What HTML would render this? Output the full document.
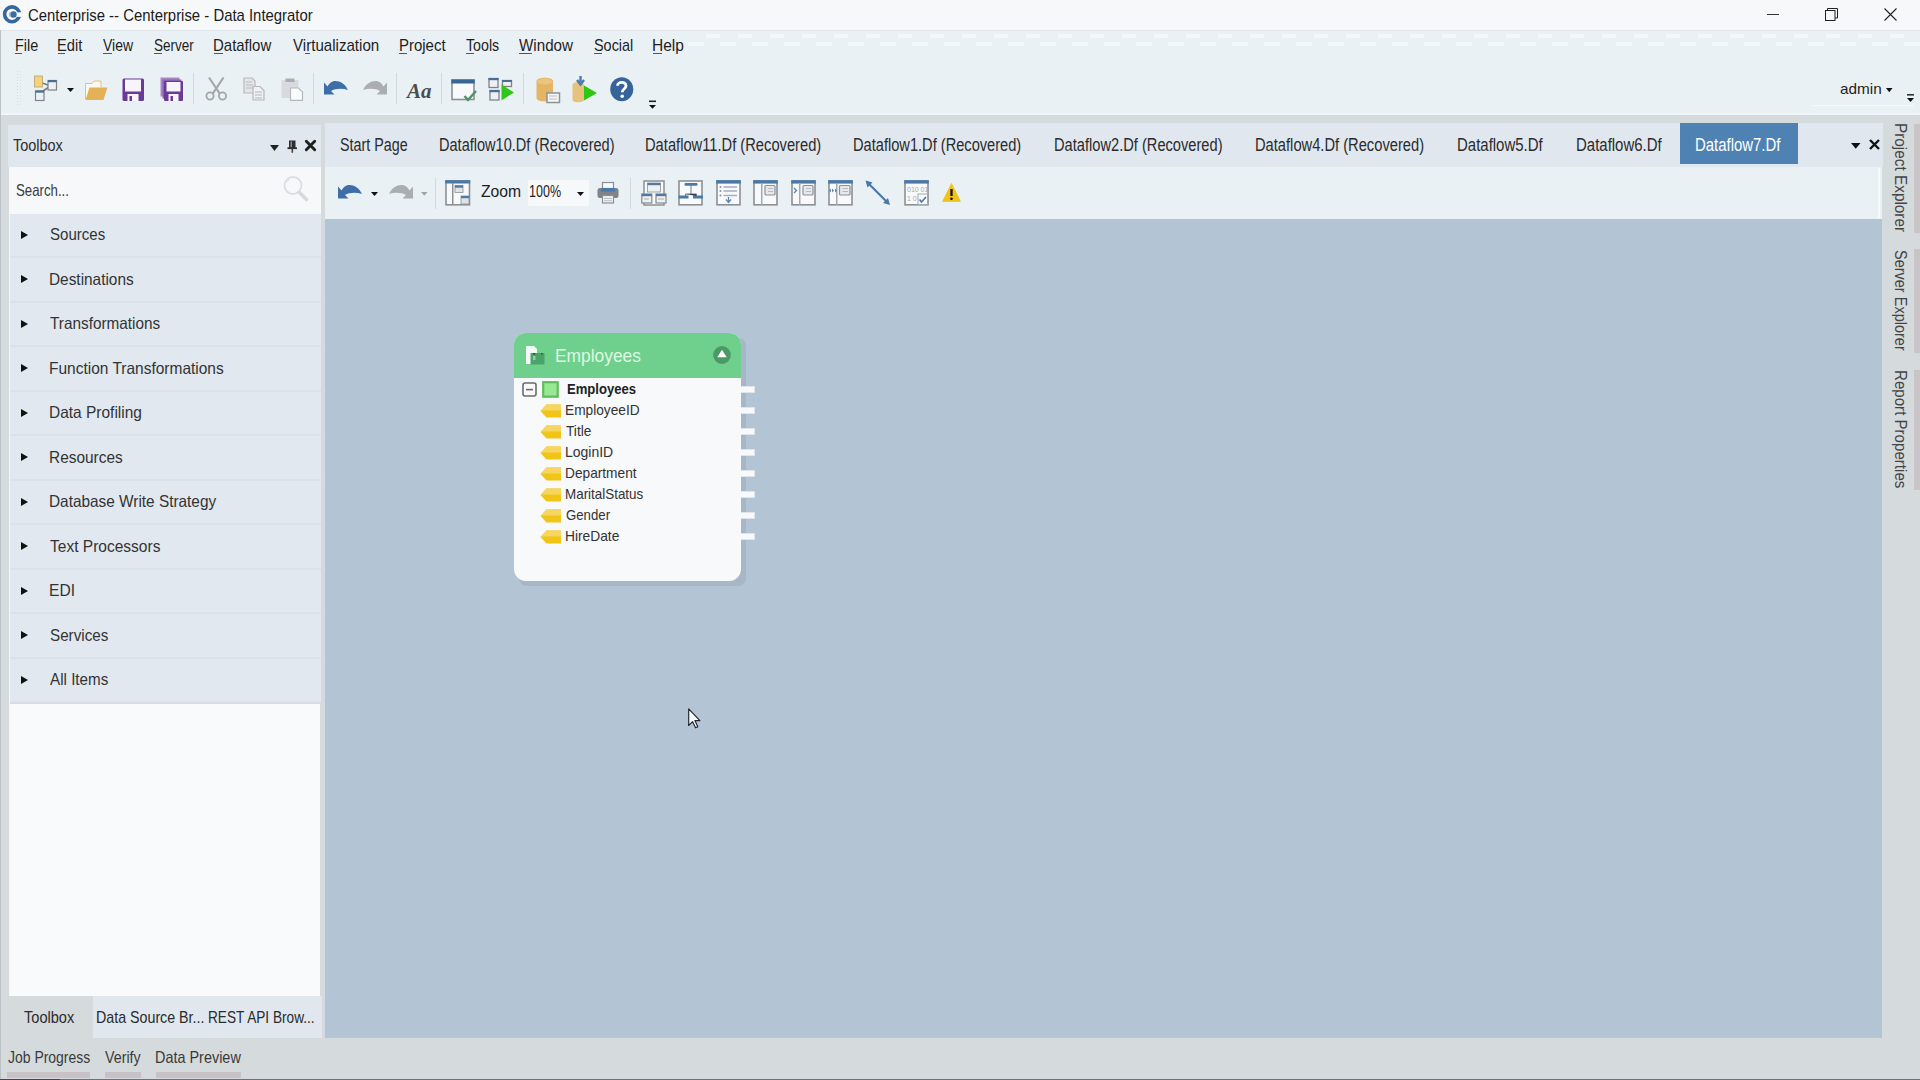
<!DOCTYPE html>
<html><head><meta charset="utf-8">
<style>
*{margin:0;padding:0;box-sizing:border-box}
html,body{width:1920px;height:1080px;overflow:hidden;background:#eaf1f4;font-family:"Liberation Sans",sans-serif;position:relative}
.a{position:absolute}
.t{position:absolute;line-height:1;white-space:pre;transform-origin:0 0}
svg{position:absolute;overflow:visible}
.tri{position:absolute;width:0;height:0;border-top:4.5px solid transparent;border-bottom:4.5px solid transparent;border-left:7px solid #111}
.row{position:absolute;left:10px;width:311px;height:44.5px;background:#e1e8ef;border-bottom:2px solid #dbe2e9}
</style></head><body>
<!-- title bar -->
<div class="a" style="left:0;top:0;width:1920px;height:30px;background:#f6f8fa"></div>
<!-- menu + toolbar bg -->
<div class="a" style="left:0;top:30px;width:1920px;height:85px;background:#eaf1f4;border-top:1px solid #dfe5e9"></div>
<div class="a" style="left:690px;top:34px;width:1230px;height:4px;background:repeating-linear-gradient(90deg,transparent 0 16px,#f3f8fa 16px 30px,transparent 30px 32px)"></div>
<div class="a" style="left:688px;top:42px;width:1232px;height:4px;background:repeating-linear-gradient(90deg,#f3f8fa 0 16px,transparent 16px 32px)"></div>
<!-- gray band + window frame -->
<div class="a" style="left:0;top:113px;width:1920px;height:2px;background:#f1f7fa"></div>
<div class="a" style="left:0;top:115px;width:1920px;height:965px;background:#d5dadd"></div>
<div class="a" style="left:0;top:30px;width:1px;height:1050px;background:#bcc3c8"></div>
<div class="a" style="left:0;top:1079px;width:1920px;height:1px;background:#6e7178"></div><div class="a" style="left:0;top:1079px;width:60px;height:1px;background:#4a4350"></div>
<!-- toolbox panel -->
<div class="a" style="left:8px;top:125px;width:312.5px;height:42px;background:#e0e7ee"></div>
<div class="a" style="left:9px;top:167px;width:312px;height:47px;background:#f6f8fa"></div>
<div class="a" style="left:9px;top:214px;width:1px;height:782px;background:#f4f7f9"></div>
<div class="a" style="left:10px;top:703.5px;width:310px;height:292.5px;background:#f8fafc"></div>
<!-- bottom tabs -->
<div class="a" style="left:9px;top:996px;width:84px;height:42px;background:#d5dadd"></div>
<div class="a" style="left:93px;top:996px;width:229px;height:42px;background:#e0e7ee"></div>
<div class="a" style="left:7px;top:1072px;width:83px;height:6px;background:#c8c2c7"></div>
<div class="a" style="left:105px;top:1072px;width:36px;height:6px;background:#c8c2c7"></div>
<div class="a" style="left:156px;top:1072px;width:85px;height:6px;background:#c8c2c7"></div>
<!-- document -->
<div class="a" style="left:324.5px;top:123px;width:1558px;height:44px;background:#e0e7ee"></div>
<div class="a" style="left:1680px;top:123px;width:118px;height:41px;background:#4e82b2"></div>
<div class="a" style="left:325px;top:167px;width:1557px;height:52px;background:#eaf1f4"></div>
<div class="a" style="left:1878px;top:168px;width:2px;height:50px;background:#f7fafb"></div>
<div class="a" style="left:325px;top:219px;width:1557px;height:819px;background:#b3c4d4"></div>
<!-- right panel bars -->
<div class="a" style="left:1914px;top:124px;width:6px;height:109px;background:#c9c4c8"></div>
<div class="a" style="left:1914px;top:249px;width:6px;height:104px;background:#c9c4c8"></div>
<div class="a" style="left:1914px;top:370px;width:6px;height:120px;background:#c9c4c8"></div>
<div class="row" style="top:213.5px"></div>
<div class="tri" style="left:21px;top:230.5px"></div>
<div class="row" style="top:258.0px"></div>
<div class="tri" style="left:21px;top:275.0px"></div>
<div class="row" style="top:302.5px"></div>
<div class="tri" style="left:21px;top:319.5px"></div>
<div class="row" style="top:347.0px"></div>
<div class="tri" style="left:21px;top:364.0px"></div>
<div class="row" style="top:391.5px"></div>
<div class="tri" style="left:21px;top:408.5px"></div>
<div class="row" style="top:436.0px"></div>
<div class="tri" style="left:21px;top:453.0px"></div>
<div class="row" style="top:480.5px"></div>
<div class="tri" style="left:21px;top:497.5px"></div>
<div class="row" style="top:525.0px"></div>
<div class="tri" style="left:21px;top:542.0px"></div>
<div class="row" style="top:569.5px"></div>
<div class="tri" style="left:21px;top:586.5px"></div>
<div class="row" style="top:614.0px"></div>
<div class="tri" style="left:21px;top:631.0px"></div>
<div class="row" style="top:658.5px"></div>
<div class="tri" style="left:21px;top:675.5px"></div>

<!-- logo -->
<svg style="left:0px;top:0px" width="26" height="28" viewBox="0 0 26 28"><circle cx="12" cy="14.3" r="7.4" fill="none" stroke="#35679c" stroke-width="3.6"/><rect x="15.5" y="12.3" width="8" height="4.6" fill="#f6f8fa"/><circle cx="13.4" cy="14.5" r="3.3" fill="#3a6ea3"/><rect x="9" y="12.5" width="1.6" height="4" fill="#9fbad4"/></svg>
<!-- window controls -->
<div class="a" style="left:1767px;top:14px;width:12px;height:1px;background:#333"></div>
<svg style="left:1825px;top:8px" width="13" height="13" viewBox="0 0 13 13"><rect x="0.5" y="2.5" width="9.5" height="10" fill="none" stroke="#222" stroke-width="1"/><path d="M2.5 2.5 V0.5 H12.5 V10 H10" fill="none" stroke="#222" stroke-width="1"/></svg>
<svg style="left:1884px;top:8px" width="13" height="13" viewBox="0 0 13 13"><path d="M0.5 0.5 L12.5 12.5 M12.5 0.5 L0.5 12.5" stroke="#222" stroke-width="1.1"/></svg>
<!-- menu underlines -->
<div class="a" style="left:15px;top:52.5px;width:7px;height:1.2px;background:#555"></div>
<div class="a" style="left:58px;top:52.5px;width:7px;height:1.2px;background:#555"></div>
<div class="a" style="left:103px;top:52.5px;width:9px;height:1.2px;background:#555"></div>
<div class="a" style="left:154px;top:52.5px;width:8px;height:1.2px;background:#555"></div>
<div class="a" style="left:214px;top:52.5px;width:9px;height:1.2px;background:#555"></div>
<div class="a" style="left:305px;top:52.5px;width:5px;height:1.2px;background:#555"></div>
<div class="a" style="left:399px;top:52.5px;width:8px;height:1.2px;background:#555"></div>
<div class="a" style="left:466px;top:52.5px;width:8px;height:1.2px;background:#555"></div>
<div class="a" style="left:519px;top:52.5px;width:13px;height:1.2px;background:#555"></div>
<div class="a" style="left:594px;top:52.5px;width:8px;height:1.2px;background:#555"></div>
<div class="a" style="left:653px;top:52.5px;width:9px;height:1.2px;background:#555"></div>
<!-- toolbar grip -->
<div class="a" style="left:16px;top:70px;width:6px;height:37px;background:radial-gradient(circle,#d5dde2 0.8px,transparent 1px) 0 0/3px 3px"></div>
<!-- new dataflow -->
<svg style="left:34px;top:75px" width="42" height="27" viewBox="0 0 42 27">
<path d="M5 7 L17 11 M9 16 L15 12" stroke="#7b7e82" stroke-width="1.6" fill="none"/>
<rect x="0.5" y="1" width="8" height="11" fill="#f3d47a" stroke="#b8a070" stroke-width="0.8"/>
<rect x="14" y="5.5" width="8.5" height="9.5" fill="#eef1f4" stroke="#7e8388" stroke-width="1.2"/><rect x="14" y="5" width="8.5" height="2.2" fill="#4d6e94"/>
<rect x="1.5" y="16" width="8.5" height="9.5" fill="#eef1f4" stroke="#7e8388" stroke-width="1.2"/><rect x="1.5" y="15.5" width="8.5" height="2.2" fill="#4d6e94"/>
<path d="M33 13 L40 13 L36.5 17 Z" fill="#111"/>
</svg>
<!-- folder -->
<svg style="left:84px;top:79px" width="25" height="23" viewBox="0 0 25 23"><path d="M1.5 20 V4.5 H8 L10 2 H17 V8" fill="#fbf8f0" stroke="#e2c183" stroke-width="1"/><path d="M1.5 21 L5.5 8.5 H23.5 L19.5 21 Z" fill="#e3b256"/></svg>
<!-- save -->
<svg style="left:122px;top:78px" width="23" height="24" viewBox="0 0 23 24"><rect x="0.5" y="0.5" width="21.5" height="22.5" rx="1.5" fill="#6a3a97"/><rect x="3" y="1.5" width="16" height="12" fill="#f7f5fb"/><rect x="5.5" y="16" width="11" height="7" fill="#f7f5fb"/><rect x="7.5" y="18" width="2.5" height="5" fill="#6a3a97"/></svg>
<svg style="left:160px;top:77px" width="24" height="25" viewBox="0 0 24 25"><rect x="0.5" y="0.5" width="19" height="19" fill="#a887c7"/><rect x="2.5" y="2.5" width="19" height="19" fill="#8a62b3"/><rect x="4" y="4" width="19" height="20" rx="1" fill="#6a3a97"/><rect x="6.5" y="5" width="14" height="9.5" fill="#f7f5fb"/><rect x="8.5" y="17" width="10" height="7" fill="#f7f5fb"/><rect x="10.5" y="19" width="2.5" height="5" fill="#6a3a97"/></svg>
<!-- separators -->
<div class="a" style="left:193px;top:73px;width:1px;height:31px;background:#d3dade"></div>
<div class="a" style="left:313px;top:73px;width:1px;height:31px;background:#d3dade"></div>
<div class="a" style="left:396px;top:73px;width:1px;height:31px;background:#d3dade"></div>
<div class="a" style="left:441px;top:73px;width:1px;height:31px;background:#d3dade"></div>
<div class="a" style="left:523px;top:73px;width:1px;height:31px;background:#d3dade"></div>
<!-- cut -->
<svg style="left:205px;top:77px" width="23" height="24" viewBox="0 0 23 24"><path d="M4 0.5 L15 17 M18.5 0.5 L7.5 17" stroke="#a3a7ab" stroke-width="2.2" fill="none"/><circle cx="5" cy="19" r="3.6" fill="none" stroke="#a3a7ab" stroke-width="1.8"/><circle cx="17.5" cy="19" r="3.6" fill="none" stroke="#a3a7ab" stroke-width="1.8"/></svg>
<!-- copy -->
<svg style="left:243px;top:77px" width="22" height="24" viewBox="0 0 22 24"><path d="M1 1 H9 L12 4 V16 H1 Z" fill="#e3e6e9" stroke="#b5b9bd" stroke-width="1.2"/><path d="M3 5 H9 M3 8 H10 M3 11 H10" stroke="#b5b9bd"/><path d="M10 9.5 H17 L21 13.5 V23 H10 Z" fill="#eef0f2" stroke="#b5b9bd" stroke-width="1.2"/><path d="M12 15 H19 M12 18 H19 M12 21 H19" stroke="#b5b9bd"/></svg>
<!-- paste -->
<svg style="left:281px;top:77px" width="23" height="24" viewBox="0 0 23 24"><rect x="0.5" y="3" width="17" height="18" fill="#d7dbdf"/><rect x="4.5" y="1.5" width="9" height="3.5" fill="#a9adb1"/><path d="M9.5 11 H17.5 L21.5 15 V23.3 H9.5 Z" fill="#fafbfb" stroke="#b5b9bd" stroke-width="1.2"/></svg>
<!-- undo -->
<svg style="left:324px;top:80px" width="25" height="16" viewBox="0 0 25 16"><path d="M0 2.5 L0 14.5 L10.5 14.5 L7 11 C11 8.5 18 8 24 10 C21 3 15 0.3 10 1 C7.5 1.5 5 3.5 3.5 6.5 Z" fill="#3d6ea7"/></svg>
<!-- redo -->
<svg style="left:363px;top:80px" width="25" height="16" viewBox="0 0 25 16"><path d="M24 2.5 L24 14.5 L13.5 14.5 L17 11 C13 8.5 6 8 0 10 C3 3 9 0.3 14 1 C16.5 1.5 19 3.5 20.5 6.5 Z" fill="#aaaeb3"/></svg>
<!-- Aa -->
<div class="t" style="left:407px;top:81px;font-family:'Liberation Serif';font-style:italic;font-weight:bold;font-size:21px;color:#4a4d50">Aa</div>
<!-- window check -->
<svg style="left:451px;top:79px" width="26" height="23" viewBox="0 0 26 23"><rect x="1" y="1" width="22" height="19.5" fill="#f7f9fb" stroke="#8c9095" stroke-width="1.6"/><rect x="0.3" y="0.5" width="23.4" height="4" fill="#386496"/><path d="M13.5 17 L17 21 L25 12" stroke="#4f8f6c" stroke-width="2.4" fill="none"/></svg>
<!-- table play -->
<svg style="left:488px;top:77px" width="27" height="25" viewBox="0 0 27 25"><rect x="1" y="1.5" width="9" height="9" fill="#eef1f4" stroke="#7e8388" stroke-width="1.3"/><rect x="0.5" y="1" width="10" height="2.2" fill="#4d6e94"/><rect x="2" y="13.5" width="9" height="9.5" fill="#eef1f4" stroke="#7e8388" stroke-width="1.3"/><rect x="1.5" y="13" width="10" height="2.2" fill="#4d6e94"/><rect x="14.5" y="3.5" width="9" height="6" fill="#eef1f4" stroke="#7e8388" stroke-width="1.3"/><rect x="14" y="3" width="10" height="2" fill="#4d6e94"/><path d="M13.5 7.5 L26 15.5 L13.5 23.5 Z" fill="#2fc615"/></svg>
<!-- db -->
<svg style="left:536px;top:77px" width="25" height="26" viewBox="0 0 25 26"><path d="M0.5 4 C0.5 -0.5 17 -0.5 17 4 V21 C17 25.5 0.5 25.5 0.5 21 Z" fill="#e3b564"/><ellipse cx="8.75" cy="4.5" rx="7.5" ry="3" fill="#ebc57e"/><rect x="11" y="16" width="12.5" height="9.5" fill="#f5f6f7" stroke="#8d9196" stroke-width="1.5"/><path d="M13 19 H21 M13 22 H21" stroke="#b8bcc0"/></svg>
<svg style="left:572px;top:76px" width="26" height="27" viewBox="0 0 26 27"><path d="M0.5 9 C0.5 5 12 5 12 9 V24 C12 27 0.5 27 0.5 24 Z" fill="#e6c27d"/><path d="M8.5 0 V6 M5 4 L8.5 8.5 L12 4" stroke="#4a7ab0" stroke-width="2.4" fill="none"/><path d="M12 9.5 L25 17 L12 24.5 Z" fill="#2fc615"/></svg>
<!-- help -->
<svg style="left:610px;top:77px" width="24" height="25" viewBox="0 0 24 25"><ellipse cx="11.75" cy="12.25" rx="11.5" ry="12" fill="#36649a"/><path d="M7.5 8.8 C7.5 4.5 16 4.2 16 8.8 C16 12 12.2 12 12.2 15.2" stroke="#fff" stroke-width="2.8" fill="none"/><circle cx="12.2" cy="19.3" r="1.8" fill="#fff"/></svg>
<!-- overflow main -->
<svg style="left:649px;top:100px" width="8" height="9" viewBox="0 0 8 9"><rect x="0" y="0.5" width="7" height="1.6" fill="#222"/><path d="M0 5 H7 L3.5 8.7 Z" fill="#111"/></svg>
<!-- admin arrow + overflow -->
<svg style="left:1886px;top:88px" width="7" height="5" viewBox="0 0 7 5"><path d="M0 0 H6.5 L3.25 4.2 Z" fill="#111"/></svg>
<div class="a" style="left:1812px;top:105px;width:102px;height:1px;background:#f6f9fa"></div>
<svg style="left:1906.5px;top:94px" width="8" height="9" viewBox="0 0 8 9"><rect x="0" y="0" width="7" height="1.6" fill="#333"/><path d="M0 4 H7 L3.5 8 Z" fill="#111"/></svg>
<!-- toolbox header icons -->
<svg style="left:270px;top:144.5px" width="10" height="7" viewBox="0 0 10 7"><path d="M0 0 H9 L4.5 6 Z" fill="#222"/></svg>
<svg style="left:287px;top:140px" width="11" height="13" viewBox="0 0 11 13"><rect x="2" y="0.5" width="6.5" height="7.5" fill="#2e2e2e"/><rect x="3.5" y="1.5" width="1.5" height="6" fill="#8a8f94"/><rect x="0.5" y="7.3" width="9.5" height="1.8" fill="#2e2e2e"/><rect x="4.5" y="9" width="1.6" height="3.8" fill="#444"/></svg>
<svg style="left:305px;top:140px" width="11" height="11" viewBox="0 0 11 11"><path d="M1.3 1.3 L9.7 9.7 M9.7 1.3 L1.3 9.7" stroke="#1f1f1f" stroke-width="2.9" stroke-linecap="round"/></svg>
<!-- magnifier -->
<svg style="left:282px;top:175px" width="28" height="28" viewBox="0 0 28 28"><circle cx="11" cy="10.5" r="8.5" fill="none" stroke="#dcdde1" stroke-width="1.8"/><path d="M4.5 7 L7 4.5" stroke="#dfe3e3" stroke-width="1.2"/><path d="M18 18 L24.5 24.5" stroke="#ddd7dd" stroke-width="3.8" stroke-linecap="round"/></svg>
<!-- tab strip right icons -->
<svg style="left:1851px;top:142.5px" width="10" height="7" viewBox="0 0 10 7"><path d="M0 0 H9.5 L4.75 5.7 Z" fill="#111"/></svg>
<svg style="left:1869px;top:139px" width="11" height="11" viewBox="0 0 11 11"><path d="M1 1 L10 10 M10 1 L1 10" stroke="#111" stroke-width="2.4"/></svg>
<!-- doc toolbar -->
<svg style="left:337.5px;top:183.5px" width="25" height="15" viewBox="0 0 25 15"><path d="M0 2.5 L0 14.5 L10.5 14.5 L7 11 C11 8.5 18 8 24 10 C21 3 15 0.3 10 1 C7.5 1.5 5 3.5 3.5 6.5 Z" fill="#3d6ea7"/></svg>
<svg style="left:371px;top:191.5px" width="8" height="5" viewBox="0 0 8 5"><path d="M0 0 H7 L3.5 4 Z" fill="#111"/></svg>
<svg style="left:389px;top:183.5px" width="25" height="15" viewBox="0 0 25 15"><path d="M24 2.5 L24 14.5 L13.5 14.5 L17 11 C13 8.5 6 8 0 10 C3 3 9 0.3 14 1 C16.5 1.5 19 3.5 20.5 6.5 Z" fill="#aaaeb3"/></svg>
<svg style="left:421px;top:191.5px" width="8" height="5" viewBox="0 0 8 5"><path d="M0 0 H6.5 L3.25 3.8 Z" fill="#a0a4a8"/></svg>
<div class="a" style="left:434.5px;top:177.5px;width:1px;height:31px;background:#d3dade"></div>
<svg style="left:445px;top:179.5px" width="26" height="27" viewBox="0 0 26 27"><rect x="1" y="1" width="23.5" height="23.8" fill="#f7f9fb" stroke="#8c9095" stroke-width="1.6"/><rect x="0.2" y="0.2" width="25" height="3.3" fill="#4a78a8"/><rect x="7" y="3" width="1.5" height="22" fill="#8c9095"/><rect x="10" y="5.5" width="8" height="7" fill="#dfe3e7" stroke="#8c9095" stroke-width="0.8"/><rect x="10" y="5.5" width="8" height="2.2" fill="#5079a3"/><rect x="16" y="16" width="8" height="8" fill="#dfe3e7" stroke="#8c9095" stroke-width="0.8"/><rect x="16" y="16" width="8" height="2.2" fill="#5079a3"/></svg>
<div class="a" style="left:528px;top:180px;width:61px;height:26px;background:#f6f8fa"></div>
<svg style="left:576.5px;top:191.5px" width="8" height="5" viewBox="0 0 8 5"><path d="M0 0 H7 L3.5 4 Z" fill="#111"/></svg>
<svg style="left:597px;top:182px" width="22" height="22" viewBox="0 0 22 22"><rect x="5.5" y="0.5" width="11" height="6" fill="#f7f9fb" stroke="#8c9095" stroke-width="1.2"/><rect x="0.5" y="6" width="21" height="10" rx="2.5" fill="#7f8388"/><rect x="4" y="6" width="14" height="3.5" fill="#4a78a8"/><rect x="5.5" y="13.5" width="11" height="7.5" fill="#f1f3f5" stroke="#8c9095" stroke-width="1.2"/><path d="M7 16.5 H15 M7 18.8 H15" stroke="#b7bcc1"/></svg>
<div class="a" style="left:630px;top:177.5px;width:1px;height:31px;background:#d3dade"></div>
<!-- A: hierarchy windows -->
<svg style="left:640.5px;top:179.5px" width="26" height="27" viewBox="0 0 26 27"><rect x="3" y="1" width="20" height="24" fill="#f7f9fb" stroke="#8c9095" stroke-width="1.5"/><rect x="6.5" y="3" width="13" height="9" fill="#eef1f4" stroke="#8c9095" stroke-width="0.8"/><rect x="6.5" y="3" width="13" height="2.2" fill="#5079a3"/><rect x="0.8" y="14" width="10" height="9" fill="#eef1f4" stroke="#8c9095" stroke-width="1.3"/><rect x="0.8" y="14" width="10" height="2.2" fill="#5079a3"/><rect x="15" y="14" width="10" height="9" fill="#eef1f4" stroke="#8c9095" stroke-width="1.3"/><rect x="15" y="14" width="10" height="2.2" fill="#5079a3"/><path d="M3 19 H8 M17 19 H23" stroke="#b7a88a"/></svg>
<!-- B: tree -->
<svg style="left:678px;top:179.5px" width="26" height="27" viewBox="0 0 26 27"><rect x="1" y="1" width="23" height="23.8" fill="#f7f9fb" stroke="#8c9095" stroke-width="1.6"/><rect x="6.5" y="3" width="13" height="2.8" rx="1" fill="#4a78a8"/><path d="M13 5 V14 M7.5 14 H18.5 V16 M7.5 14 V16" stroke="#6c7a88" stroke-width="1"/><rect x="0.5" y="15.5" width="10" height="3" fill="#4a78a8"/><rect x="15" y="15.5" width="10" height="3" fill="#4a78a8"/></svg>
<!-- C: list -->
<svg style="left:716px;top:179.5px" width="26" height="27" viewBox="0 0 26 27"><rect x="1" y="1" width="23" height="23.8" fill="#f7f9fb" stroke="#8c9095" stroke-width="1.6"/><rect x="0.2" y="0.2" width="24.6" height="3.4" fill="#4a78a8"/><circle cx="4.5" cy="7" r="1" fill="#8c9095"/><circle cx="4.5" cy="11" r="1" fill="#8c9095"/><circle cx="4.5" cy="15.5" r="1" fill="#8c9095"/><path d="M7.5 7 H21 M7.5 11 H21 M7.5 15.5 H21" stroke="#a9adc0" stroke-width="1.3"/><path d="M12.5 17 V22 M10 19.5 L12.5 22.5 L15 19.5" stroke="#5a86b5" stroke-width="1.3" fill="none"/></svg>
<!-- D -->
<svg style="left:753px;top:179.5px" width="26" height="27" viewBox="0 0 26 27"><rect x="1" y="1" width="23" height="23.8" fill="#f7f9fb" stroke="#8c9095" stroke-width="1.6"/><rect x="0.2" y="0.2" width="24.6" height="3.4" fill="#4a78a8"/><rect x="8" y="3" width="1.5" height="22" fill="#a5a9ad"/><rect x="12" y="5.5" width="10" height="9.5" rx="1" fill="#e6e8eb" stroke="#8c9095" stroke-width="1.2"/><path d="M15 8.5 H20 M15 11.5 H20" stroke="#b7bcc1"/></svg>
<!-- E -->
<svg style="left:791px;top:179.5px" width="26" height="27" viewBox="0 0 26 27"><rect x="1" y="1" width="23" height="23.8" fill="#f7f9fb" stroke="#8c9095" stroke-width="1.6"/><rect x="0.2" y="0.2" width="24.6" height="3.4" fill="#4a78a8"/><rect x="8" y="3" width="1.5" height="22" fill="#a5a9ad"/><rect x="12" y="5.5" width="10" height="9.5" rx="1" fill="#e6e8eb" stroke="#8c9095" stroke-width="1.2"/><path d="M15 8.5 H20 M15 11.5 H20" stroke="#b7bcc1"/><path d="M3 8 L5.5 10.5 L3 13" stroke="#5a86b5" stroke-width="1.4" fill="none"/></svg>
<!-- F -->
<svg style="left:828px;top:179.5px" width="26" height="27" viewBox="0 0 26 27"><rect x="1" y="1" width="23" height="23.8" fill="#f7f9fb" stroke="#8c9095" stroke-width="1.6"/><rect x="0.2" y="0.2" width="24.6" height="3.4" fill="#4a78a8"/><rect x="8" y="3" width="1.5" height="22" fill="#a5a9ad"/><rect x="11.5" y="5.5" width="10.5" height="9.5" rx="1" fill="#e6e8eb" stroke="#8c9095" stroke-width="1.2"/><path d="M14.5 8.5 H20 M14.5 11.5 H20" stroke="#b7bcc1"/><path d="M1 10.5 L3 8.5 L3 12.5 Z M4 8.5 L6 10.5 L4 12.5 Z M7 8.5 L9 10.5 L7 12.5 Z" fill="#5a86b5"/></svg>
<!-- line arrow -->
<svg style="left:865px;top:180px" width="26" height="26" viewBox="0 0 26 26"><path d="M2 2 L22 22" stroke="#4a78a8" stroke-width="2.2"/><path d="M0.5 0.5 L7.5 2.5 L2.5 7.5 Z M25 25 L18 23 L23 18 Z" fill="#4a78a8"/></svg>
<!-- data check -->
<svg style="left:903.5px;top:179.5px" width="26" height="27" viewBox="0 0 26 27"><rect x="1" y="1" width="23" height="23.8" fill="#f7f9fb" stroke="#8c9095" stroke-width="1.6"/><rect x="0.2" y="0.2" width="24.6" height="3.4" fill="#4a78a8"/><text x="3" y="12" font-family="Liberation Sans" font-size="7" fill="#a5a9ad">010 01</text><text x="3" y="21" font-family="Liberation Sans" font-size="7" fill="#a5a9ad">1 0</text><rect x="14" y="14" width="9.5" height="10.5" fill="#f7f9fb" stroke="#a5a9ad" stroke-width="1"/><path d="M15.5 19.5 L17.5 22 L22 17" stroke="#4a78a8" stroke-width="1.6" fill="none"/></svg>
<!-- warning -->
<svg style="left:941.5px;top:183px" width="19" height="19" viewBox="0 0 19 19"><path d="M9.5 0.5 L18.5 18.5 H0.5 Z" fill="#f1c319" stroke="#f1c319" stroke-width="0.8" stroke-linejoin="round"/><path d="M9.5 6 V13" stroke="#111" stroke-width="2.3"/><circle cx="9.5" cy="15.8" r="1.3" fill="#111"/></svg>

<!-- Employees box -->
<div class="a" style="left:519px;top:338px;width:227px;height:248px;border-radius:8px;background:#a7b7c8"></div>
<div class="a" style="left:513.5px;top:332.5px;width:227px;height:248px;border-radius:12px;background:#f7f9fb;overflow:hidden"><div class="a" style="left:0;top:0;width:227px;height:45px;background:#6fd08e"></div></div>
<svg style="left:525px;top:345px" width="21" height="21" viewBox="0 0 21 21"><path d="M1 1 H9 L12 4 V19 H1 Z" fill="#f3fbf5"/><rect x="5.5" y="8" width="14" height="11.5" fill="#4aa36a"/><rect x="8" y="8" width="2.2" height="1.5" fill="#1f5a35"/><rect x="16" y="8" width="1.5" height="1.5" fill="#1f5a35"/><rect x="8" y="11" width="2.5" height="4" fill="#8fd0a5"/></svg>
<svg style="left:713px;top:346px" width="18" height="18" viewBox="0 0 18 18"><circle cx="9" cy="9" r="8.9" fill="#4a9a66"/><path d="M9 3.8 L13.7 11.2 H4.3 Z" fill="#fff"/></svg>
<svg style="left:522px;top:381.5px" width="16" height="16" viewBox="0 0 16 16"><rect x="1" y="1" width="13" height="13" rx="2" fill="#fafafa" stroke="#6b6b6e" stroke-width="1.6"/><rect x="4" y="6.8" width="7" height="1.6" fill="#6b6b6e"/></svg>
<svg style="left:542px;top:381px" width="17" height="17" viewBox="0 0 17 17"><rect x="1.2" y="1.2" width="14.5" height="14.5" fill="#98e893" stroke="#5fbc5d" stroke-width="2.2"/></svg>
<svg style="left:540px;top:403.5px" width="22" height="14" viewBox="0 0 22 14"><path d="M0.5 7 L6.5 0.5 H21 V13.5 H6.5 Z" fill="#f1c418"/><path d="M0.5 7 L6.5 0.5 H21 V6.5 H1 Z" fill="#f6d660"/></svg>
<div class="a" style="left:741px;top:406.5px;width:14px;height:7px;background:#f7f9fb;border:1px solid #dfe4ea;border-left:none"></div>
<svg style="left:540px;top:424.5px" width="22" height="14" viewBox="0 0 22 14"><path d="M0.5 7 L6.5 0.5 H21 V13.5 H6.5 Z" fill="#f1c418"/><path d="M0.5 7 L6.5 0.5 H21 V6.5 H1 Z" fill="#f6d660"/></svg>
<div class="a" style="left:741px;top:427.5px;width:14px;height:7px;background:#f7f9fb;border:1px solid #dfe4ea;border-left:none"></div>
<svg style="left:540px;top:445.5px" width="22" height="14" viewBox="0 0 22 14"><path d="M0.5 7 L6.5 0.5 H21 V13.5 H6.5 Z" fill="#f1c418"/><path d="M0.5 7 L6.5 0.5 H21 V6.5 H1 Z" fill="#f6d660"/></svg>
<div class="a" style="left:741px;top:448.5px;width:14px;height:7px;background:#f7f9fb;border:1px solid #dfe4ea;border-left:none"></div>
<svg style="left:540px;top:466.5px" width="22" height="14" viewBox="0 0 22 14"><path d="M0.5 7 L6.5 0.5 H21 V13.5 H6.5 Z" fill="#f1c418"/><path d="M0.5 7 L6.5 0.5 H21 V6.5 H1 Z" fill="#f6d660"/></svg>
<div class="a" style="left:741px;top:469.5px;width:14px;height:7px;background:#f7f9fb;border:1px solid #dfe4ea;border-left:none"></div>
<svg style="left:540px;top:487.5px" width="22" height="14" viewBox="0 0 22 14"><path d="M0.5 7 L6.5 0.5 H21 V13.5 H6.5 Z" fill="#f1c418"/><path d="M0.5 7 L6.5 0.5 H21 V6.5 H1 Z" fill="#f6d660"/></svg>
<div class="a" style="left:741px;top:490.5px;width:14px;height:7px;background:#f7f9fb;border:1px solid #dfe4ea;border-left:none"></div>
<svg style="left:540px;top:508.5px" width="22" height="14" viewBox="0 0 22 14"><path d="M0.5 7 L6.5 0.5 H21 V13.5 H6.5 Z" fill="#f1c418"/><path d="M0.5 7 L6.5 0.5 H21 V6.5 H1 Z" fill="#f6d660"/></svg>
<div class="a" style="left:741px;top:511.5px;width:14px;height:7px;background:#f7f9fb;border:1px solid #dfe4ea;border-left:none"></div>
<svg style="left:540px;top:529.5px" width="22" height="14" viewBox="0 0 22 14"><path d="M0.5 7 L6.5 0.5 H21 V13.5 H6.5 Z" fill="#f1c418"/><path d="M0.5 7 L6.5 0.5 H21 V6.5 H1 Z" fill="#f6d660"/></svg>
<div class="a" style="left:741px;top:532.5px;width:14px;height:7px;background:#f7f9fb;border:1px solid #dfe4ea;border-left:none"></div>
<div class="a" style="left:741px;top:385.5px;width:14px;height:7px;background:#f7f9fb;border:1px solid #dfe4ea;border-left:none"></div>

<!-- cursor -->
<svg style="left:688px;top:708px" width="13" height="21" viewBox="0 0 13 21"><path d="M0.7 0.8 L0.7 17.5 L4.6 13.7 L7.6 19.8 L9.8 18.7 L6.9 12.6 L11.9 12.6 Z" fill="#fbfbfd" stroke="#1c2530" stroke-width="1.15" stroke-linejoin="round"/></svg>

<div class="t" style="left:27.50px;top:6.51px;font-size:17px;color:#1b1b1b;font-weight:normal;transform:scaleX(0.8760);">Centerprise -- Centerprise - Data Integrator</div>
<div class="t" style="left:14.55px;top:36.61px;font-size:17px;color:#1e1e1e;font-weight:normal;transform:scaleX(0.8520);">File</div>
<div class="t" style="left:56.94px;top:36.61px;font-size:17px;color:#1e1e1e;font-weight:normal;transform:scaleX(0.8645);">Edit</div>
<div class="t" style="left:102.80px;top:36.61px;font-size:17px;color:#1e1e1e;font-weight:normal;transform:scaleX(0.8239);">View</div>
<div class="t" style="left:154.00px;top:36.61px;font-size:17px;color:#1e1e1e;font-weight:normal;transform:scaleX(0.7935);">Server</div>
<div class="t" style="left:213.12px;top:36.61px;font-size:17px;color:#1e1e1e;font-weight:normal;transform:scaleX(0.8806);">Dataflow</div>
<div class="t" style="left:293.00px;top:36.61px;font-size:17px;color:#1e1e1e;font-weight:normal;transform:scaleX(0.8885);">Virtualization</div>
<div class="t" style="left:398.52px;top:36.61px;font-size:17px;color:#1e1e1e;font-weight:normal;transform:scaleX(0.8795);">Project</div>
<div class="t" style="left:466.00px;top:36.61px;font-size:17px;color:#1e1e1e;font-weight:normal;transform:scaleX(0.8370);">Tools</div>
<div class="t" style="left:519.40px;top:36.61px;font-size:17px;color:#1e1e1e;font-weight:normal;transform:scaleX(0.8924);">Window</div>
<div class="t" style="left:594.40px;top:36.61px;font-size:17px;color:#1e1e1e;font-weight:normal;transform:scaleX(0.8479);">Social</div>
<div class="t" style="left:652.49px;top:36.61px;font-size:17px;color:#1e1e1e;font-weight:normal;transform:scaleX(0.9132);">Help</div>
<div class="t" style="left:1840.00px;top:81.30px;font-size:15px;color:#1e1e1e;font-weight:normal;transform:scaleX(1.0194);">admin</div>
<div class="t" style="left:340.00px;top:136.79px;font-size:17.5px;color:#2b2b2b;font-weight:normal;transform:scaleX(0.8175);">Start Page</div>
<div class="t" style="left:439.07px;top:136.79px;font-size:17.5px;color:#2b2b2b;font-weight:normal;transform:scaleX(0.8316);">Dataflow10.Df (Recovered)</div>
<div class="t" style="left:645.46px;top:136.79px;font-size:17.5px;color:#2b2b2b;font-weight:normal;transform:scaleX(0.8402);">Dataflow11.Df (Recovered)</div>
<div class="t" style="left:852.96px;top:136.79px;font-size:17.5px;color:#2b2b2b;font-weight:normal;transform:scaleX(0.8356);">Dataflow1.Df (Recovered)</div>
<div class="t" style="left:1054.16px;top:136.79px;font-size:17.5px;color:#2b2b2b;font-weight:normal;transform:scaleX(0.8371);">Dataflow2.Df (Recovered)</div>
<div class="t" style="left:1255.46px;top:136.79px;font-size:17.5px;color:#2b2b2b;font-weight:normal;transform:scaleX(0.8396);">Dataflow4.Df (Recovered)</div>
<div class="t" style="left:1457.14px;top:136.79px;font-size:17.5px;color:#2b2b2b;font-weight:normal;transform:scaleX(0.8558);">Dataflow5.Df</div>
<div class="t" style="left:1576.14px;top:136.79px;font-size:17.5px;color:#2b2b2b;font-weight:normal;transform:scaleX(0.8558);">Dataflow6.Df</div>
<div class="t" style="left:1695.15px;top:136.79px;font-size:17.5px;color:#ffffff;font-weight:normal;transform:scaleX(0.8528);">Dataflow7.Df</div>
<div class="t" style="left:13.30px;top:136.83px;font-size:16.5px;color:#2d2d2d;font-weight:normal;transform:scaleX(0.8764);">Toolbox</div>
<div class="t" style="left:15.50px;top:181.83px;font-size:16.5px;color:#3a3a3a;font-weight:normal;transform:scaleX(0.8022);">Search...</div>
<div class="t" style="left:49.50px;top:226.03px;font-size:16.5px;color:#333333;font-weight:normal;transform:scaleX(0.9124);">Sources</div>
<div class="t" style="left:48.57px;top:270.53px;font-size:16.5px;color:#333333;font-weight:normal;transform:scaleX(0.9325);">Destinations</div>
<div class="t" style="left:49.50px;top:315.03px;font-size:16.5px;color:#333333;font-weight:normal;transform:scaleX(0.9295);">Transformations</div>
<div class="t" style="left:48.56px;top:359.53px;font-size:16.5px;color:#333333;font-weight:normal;transform:scaleX(0.9384);">Function Transformations</div>
<div class="t" style="left:48.56px;top:404.03px;font-size:16.5px;color:#333333;font-weight:normal;transform:scaleX(0.9380);">Data Profiling</div>
<div class="t" style="left:48.57px;top:448.53px;font-size:16.5px;color:#333333;font-weight:normal;transform:scaleX(0.9341);">Resources</div>
<div class="t" style="left:48.57px;top:493.03px;font-size:16.5px;color:#333333;font-weight:normal;transform:scaleX(0.9314);">Database Write Strategy</div>
<div class="t" style="left:49.50px;top:537.53px;font-size:16.5px;color:#333333;font-weight:normal;transform:scaleX(0.9409);">Text Processors</div>
<div class="t" style="left:48.55px;top:582.03px;font-size:16.5px;color:#333333;font-weight:normal;transform:scaleX(0.9452);">EDI</div>
<div class="t" style="left:49.50px;top:626.53px;font-size:16.5px;color:#333333;font-weight:normal;transform:scaleX(0.9219);">Services</div>
<div class="t" style="left:49.50px;top:671.03px;font-size:16.5px;color:#333333;font-weight:normal;transform:scaleX(0.9221);">All Items</div>
<div class="t" style="left:24.30px;top:1008.81px;font-size:17px;color:#2b2b2b;font-weight:normal;transform:scaleX(0.8579);">Toolbox</div>
<div class="t" style="left:95.96px;top:1008.81px;font-size:17px;color:#2b2b2b;font-weight:normal;transform:scaleX(0.8377);">Data Source Br...</div>
<div class="t" style="left:208.00px;top:1008.81px;font-size:17px;color:#2b2b2b;font-weight:normal;transform:scaleX(0.8020);">REST API Brow...</div>
<div class="t" style="left:7.50px;top:1048.53px;font-size:16.5px;color:#3a3a3a;font-weight:normal;transform:scaleX(0.8457);">Job Progress</div>
<div class="t" style="left:105.00px;top:1048.53px;font-size:16.5px;color:#3a3a3a;font-weight:normal;transform:scaleX(0.8640);">Verify</div>
<div class="t" style="left:155.43px;top:1048.53px;font-size:16.5px;color:#3a3a3a;font-weight:normal;transform:scaleX(0.8744);">Data Preview</div>
<div class="t" style="left:480.80px;top:183.11px;font-size:17px;color:#1e1e1e;font-weight:normal;transform:scaleX(0.9239);">Zoom</div>
<div class="t" style="left:529.46px;top:183.41px;font-size:17px;color:#1e1e1e;font-weight:normal;transform:scaleX(0.7365);">100%</div>
<div class="t" style="left:554.59px;top:345.92px;font-size:19px;color:#def9e2;font-weight:normal;transform:scaleX(0.9136);">Employees</div>
<div class="t" style="left:567.00px;top:382.23px;font-size:14.5px;color:#222222;font-weight:bold;transform:scaleX(0.9020);">Employees</div>
<div class="t" style="left:565.06px;top:402.73px;font-size:14.5px;color:#333333;font-weight:normal;transform:scaleX(0.9444);">EmployeeID</div>
<div class="t" style="left:566.00px;top:423.73px;font-size:14.5px;color:#333333;font-weight:normal;transform:scaleX(0.9444);">Title</div>
<div class="t" style="left:565.04px;top:444.73px;font-size:14.5px;color:#333333;font-weight:normal;transform:scaleX(0.9648);">LoginID</div>
<div class="t" style="left:565.06px;top:465.73px;font-size:14.5px;color:#333333;font-weight:normal;transform:scaleX(0.9448);">Department</div>
<div class="t" style="left:565.08px;top:486.73px;font-size:14.5px;color:#333333;font-weight:normal;transform:scaleX(0.9249);">MaritalStatus</div>
<div class="t" style="left:566.00px;top:507.73px;font-size:14.5px;color:#333333;font-weight:normal;transform:scaleX(0.9107);">Gender</div>
<div class="t" style="left:565.05px;top:528.73px;font-size:14.5px;color:#333333;font-weight:normal;transform:scaleX(0.9492);">HireDate</div>
<div class="t" style="left:1908.69px;top:123.10px;font-size:17px;color:#444444;transform:rotate(90deg) scaleX(0.9021)">Project Explorer</div>
<div class="t" style="left:1908.69px;top:250.00px;font-size:17px;color:#444444;transform:rotate(90deg) scaleX(0.8528)">Server Explorer</div>
<div class="t" style="left:1908.69px;top:369.51px;font-size:17px;color:#444444;transform:rotate(90deg) scaleX(0.8882)">Report Properties</div>
</body></html>
